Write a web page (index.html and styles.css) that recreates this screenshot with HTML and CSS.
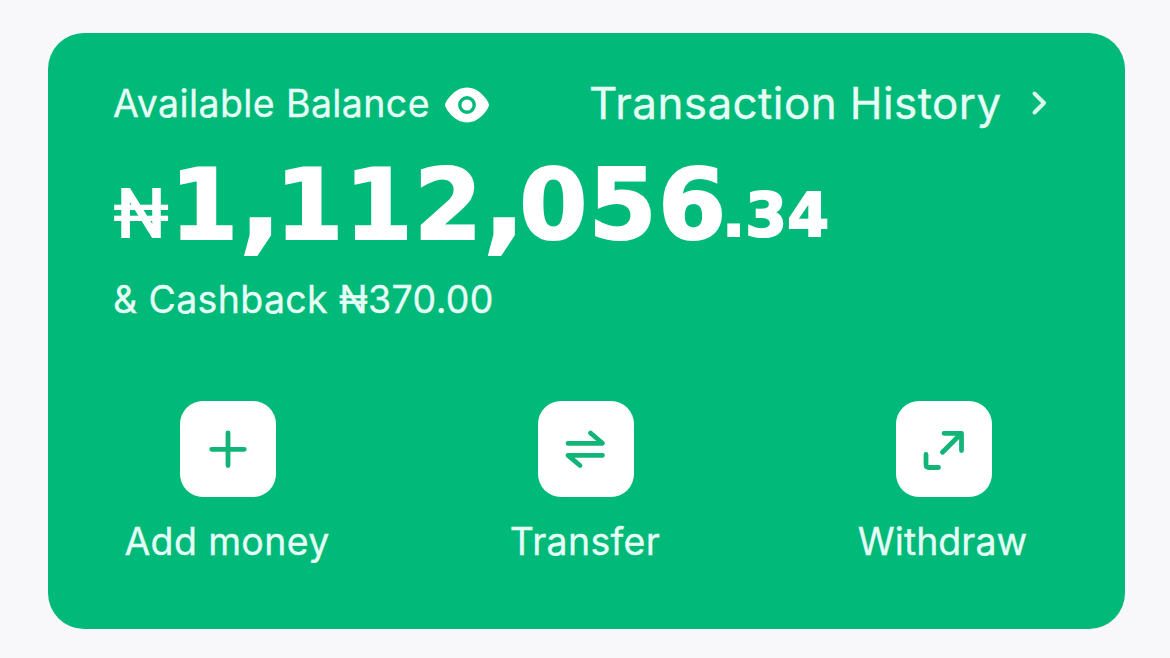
FILE: index.html
```html
<!DOCTYPE html>
<html lang="en">
<head>
<meta charset="utf-8">
<title>Wallet balance</title>
<link rel="stylesheet" href="styles.css">
</head>
<body>
<main class="card">
  <header class="header">
    <div class="available">
      <span class="available-label">Available Balance</span>
      <svg class="eye" viewBox="0 0 46 36" aria-hidden="true">
        <path fill="#fff" d="M1 18C1 15 10 .5 23 .5S45 15 45 18 36 35.500 23 35.500 1 21 1 18Z"/>
        <circle cx="23" cy="18" r="7.200" fill="#fff" stroke="#01b979" stroke-width="3.400"/>
      </svg>
    </div>
    <a class="history">
      <span class="history-label">Transaction History</span>
      <svg class="chevron" viewBox="0 0 18 26" aria-hidden="true"><path d="M3.500 3.500 13 13 3.500 22.500"/></svg>
    </a>
  </header>
  <div class="amount"><span class="currency">₦</span><span class="whole">1<i>,</i>112<i>,</i>05<b>6</b></span><span class="cents">.34</span></div>
  <div class="cashback">&amp; Cashback ₦370.00</div>
  <nav class="actions">
    <a class="action">
      <span class="tile"><svg viewBox="0 0 96 96" aria-hidden="true"><path d="M48 32V64.500M31.700 48.300H64.300"/></svg></span>
      <span class="label label-add">Add money</span>
    </a>
    <a class="action">
      <span class="tile"><svg viewBox="0 0 96 96" aria-hidden="true"><path d="M30 42.300H64.500L52.500 32M64.500 54.300H30L42 64.500"/></svg></span>
      <span class="label label-transfer">Transfer</span>
    </a>
    <a class="action">
      <span class="tile"><svg viewBox="0 0 96 96" aria-hidden="true"><path d="M48 32.300H65.500V49.500M64.500 33.300 46.500 51.300M30 53.500V63.500Q30 66.500 33 66.500H42.500"/></svg></span>
      <span class="label label-withdraw">Withdraw</span>
    </a>
  </nav>
</main>
</body>
</html>
```
FILE: styles.css
```css
* { box-sizing: border-box; }
body {
  margin: 0;
  height: 658px;
  padding: 33px 45px 29px 48px;
  background: #f8f8fb;
  font-family: Inter, Roboto, sans-serif;
  color: #e6fff6;
}
.card {
  height: 596px;
  border-radius: 36px;
  background: #01b979;
  padding-top: 46px;
  overflow: hidden;
}
.header {
  display: flex;
  justify-content: space-between;
  height: 48px;
  padding: 0 76px 0 65px;
  line-height: 48px;
  white-space: nowrap;
}
.available, .history { display: flex; align-items: center; }
.available-label {
  width: 331px;
  padding-top: 2px;
  font-size: 37.500px;
  letter-spacing: 0.4px;
}
.eye { width: 46px; height: 36px; margin-top: 3px; }
.history-label { font-size: 44px; letter-spacing: 0.4px; width: 442px; }
.chevron { width: 18px; height: 26px; }
.chevron path { fill: none; stroke: #d5f8e9; stroke-width: 4; stroke-linecap: round; stroke-linejoin: round; }
.available-label, .history-label, .cashback, .label { -webkit-text-stroke: 0.3px #e6fff6; }
.amount {
  display: flex;
  height: 100px;
  margin-top: 28px;
  padding-left: 65px;
  line-height: 100px;
  color: #fff;
  white-space: nowrap;
}
.currency { width: 57px; font-family: Roboto, sans-serif; font-size: 70px; font-weight: 500; padding-top: 9px; }
.whole {
  font: bold 98px/100px "DejaVu Sans", sans-serif;
  letter-spacing: 1.2px;
  -webkit-text-stroke: 2px #fff;
}
.whole i { font-size: 110px; font-style: normal; line-height: 0; letter-spacing: -6px; }
.whole b { letter-spacing: -4px; }
.cents {
  font: bold 60px/100px "DejaVu Sans", sans-serif;
  padding-top: 10px;
  letter-spacing: 0.3px;
  -webkit-text-stroke: 2px #fff;
}
.cashback { height: 48px; margin-top: 21px; padding-left: 65px; font-size: 37.500px; line-height: 48px; letter-spacing: 0.35px; }
.actions {
  display: grid;
  grid-template-columns: repeat(3, 358px);
  margin-top: 76.500px;
  padding-left: 0.5px;
}
.action { display: flex; flex-direction: column; align-items: center; gap: 21px; }
.tile { width: 96px; height: 96px; border-radius: 23px; background: #fff; }
.tile svg { display: block; width: 96px; height: 96px; }
.tile path { fill: none; stroke: #12b577; stroke-width: 4.800; stroke-linecap: round; stroke-linejoin: round; }
.label { font-size: 37.500px; line-height: 48px; white-space: nowrap; }
.label-add { letter-spacing: 0.35px; margin-right: 1px; }
.label-transfer { letter-spacing: 0.3px; margin-right: 1px; }
.label-withdraw { letter-spacing: 0; margin-right: 2px; }
```
